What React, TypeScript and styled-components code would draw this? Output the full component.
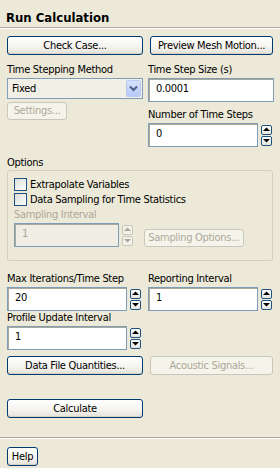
import React from 'react'
import styled, { createGlobalStyle } from 'styled-components'

const GlobalStyle = createGlobalStyle`
    html, body {
        margin: 0;
        padding: 0;
        background: #ECE9D8;
    }
    body {
        font-family: "DejaVu Sans Condensed", "DejaVu Sans", sans-serif;
        font-size: 11px;
        letter-spacing: -0.3px;
        color: #000;
    }
`

const Panel = styled.div`
    width: 280px;
    height: 468px;
    background: #ECE9D8;
    display: flex;
    flex-direction: column;
    overflow: hidden;
`

const Header = styled.div`
    height: 28px;
    box-sizing: border-box;
    padding: 10px 6px 0;
    border-bottom: 1px solid #ACA899;
`

const Title = styled.div`
    font-size: 13px;
    font-weight: bold;
    line-height: 16px;
    letter-spacing: 0;
`

const Body = styled.div`
    flex: 1;
    border-top: 1px solid #fff;
    padding: 7px 7px 0;
    display: flex;
    flex-direction: column;
`

const ButtonRow = styled.div<{ $top?: number }>`
    display: grid;
    grid-template-columns: 136px 123px;
    column-gap: 7px;
    margin-top: ${p => p.$top ?? 0}px;
`

const Button = styled.button<{ $width?: number; $height?: number }>`
    box-sizing: border-box;
    height: ${p => p.$height ?? 19}px;
    width: ${p => (p.$width ? `${p.$width}px` : '100%')};
    padding: 0 2px 1px;
    font: inherit;
    letter-spacing: inherit;
    color: #000;
    border: 1px solid #003C74;
    border-radius: 3px;
    background: linear-gradient(#FFFFFF 0%, #F4F3EE 60%, #E3E1D8 100%);
    box-shadow: inset 0 -1px 0 #D6D0C5;
    white-space: nowrap;
    &:disabled {
        color: #ACA899;
        border-color: #C9C7BA;
        background: #F5F4EA;
        box-shadow: none;
    }
`

const FieldGrid = styled.div<{ $top?: number }>`
    display: grid;
    grid-template-columns: 136px 126px;
    column-gap: 5px;
    margin-top: ${p => p.$top ?? 8}px;
`

const Column = styled.div`
    display: flex;
    flex-direction: column;
    align-items: flex-start;
`

const Label = styled.div<{ $top?: number; $disabled?: boolean }>`
    line-height: 14px;
    height: 14px;
    white-space: nowrap;
    margin-top: ${p => p.$top ?? 0}px;
    color: ${p => (p.$disabled ? '#ACA899' : '#000')};
`

const Select = styled.div`
    box-sizing: border-box;
    margin-top: 1px;
    width: 136px;
    height: 21px;
    border: 1px solid #7F9DB9;
    background: #F1EFE6;
    display: flex;
    align-items: center;
    padding: 1px;
`

const SelectText = styled.span`
    flex: 1;
    padding-left: 3px;
    padding-bottom: 1px;
`

const SelectArrow = styled.span`
    width: 15px;
    height: 17px;
    box-sizing: border-box;
    border: 1px solid #B9CBF3;
    border-radius: 2px;
    background: linear-gradient(#D6E1FD, #B7C9F8);
    display: flex;
    align-items: center;
    justify-content: center;
`

const Input = styled.input<{ $disabled?: boolean }>`
    box-sizing: border-box;
    flex: 1;
    min-width: 0;
    width: 100%;
    height: 24px;
    margin: 0;
    padding: 0 4px 3px 7px;
    font: inherit;
    letter-spacing: inherit;
    color: ${p => (p.$disabled ? '#ACA899' : '#000')};
    background: ${p => (p.$disabled ? '#EFEDE4' : '#fff')};
    border: 1px solid #7F9DB9;
    box-shadow: inset 1px 1px 0 #ACA899;
    outline: none;
`

const PlainField = styled.div`
    margin-top: 1px;
    width: 100%;
    display: flex;
`

const SpinWrap = styled.div<{ $width?: number }>`
    margin-top: 1px;
    width: ${p => (p.$width ? `${p.$width}px` : '100%')};
    box-sizing: border-box;
    padding-right: 2px;
    display: flex;
    align-items: center;
    gap: 3px;
`

const Spinner = styled.div`
    display: flex;
    flex-direction: column;
    gap: 1px;
`

const SpinButton = styled.span<{ $disabled?: boolean }>`
    box-sizing: border-box;
    width: 11px;
    height: 10px;
    border: 1px solid ${p => (p.$disabled ? '#C9C7BA' : '#1C5180')};
    border-radius: 2px;
    background: ${p => (p.$disabled ? '#F2F1EA' : 'linear-gradient(#FFFFFF, #E6E5DE)')};
    display: flex;
    align-items: center;
    justify-content: center;
`

const OptionsBox = styled.div`
    border: 1px solid #D0D0BF;
    border-radius: 3px;
    padding: 7px 6px 13px;
`

const CheckRow = styled.label`
    display: flex;
    align-items: center;
    height: 13px;
    gap: 3px;
    margin-bottom: 2px;
    white-space: nowrap;
`

const CheckBox = styled.span`
    box-sizing: border-box;
    width: 13px;
    height: 13px;
    border: 1px solid #1C5180;
    background: linear-gradient(135deg, #DCDCD7, #FFFFFF);
`

const SamplingRow = styled.div`
    display: flex;
    align-items: flex-end;
    gap: 9px;
`

const Footer = styled.div`
    height: 31px;
    box-sizing: border-box;
    border-top: 1px solid #ACA899;
    box-shadow: inset 0 1px 0 #fff;
    padding: 9px 7px 0;
`

const Arrow = ({ down, disabled }: { down?: boolean; disabled?: boolean }) => (
    <svg width="7" height="5" viewBox="0 0 7 5">
        <polygon
            points={down ? '0,1 7,1 3.5,4.5' : '0,4 7,4 3.5,0.5'}
            fill={disabled ? '#ACA899' : '#000'}
        />
    </svg>
)

const SpinField = ({ value, width, disabled }: { value: string; width?: number; disabled?: boolean }) => (
    <SpinWrap $width={width}>
        <Input readOnly defaultValue={value} $disabled={disabled} />
        <Spinner>
            <SpinButton $disabled={disabled}><Arrow disabled={disabled} /></SpinButton>
            <SpinButton $disabled={disabled}><Arrow down disabled={disabled} /></SpinButton>
        </Spinner>
    </SpinWrap>
)

export default function App() {
    return (
        <Panel>
            <GlobalStyle />
            <Header>
                <Title>Run Calculation</Title>
            </Header>
            <Body>
                <ButtonRow>
                    <Button>Check Case...</Button>
                    <Button>Preview Mesh Motion...</Button>
                </ButtonRow>

                <FieldGrid>
                    <Column>
                        <Label>Time Stepping Method</Label>
                        <Select>
                            <SelectText>Fixed</SelectText>
                            <SelectArrow>
                                <svg width="9" height="7" viewBox="0 0 9 7">
                                    <path d="M1 1.5 L4.5 5 L8 1.5" stroke="#4D6185" strokeWidth="2" fill="none" />
                                </svg>
                            </SelectArrow>
                        </Select>
                        <Button $width={60} $height={18} disabled style={{ marginTop: 3 }}>Settings...</Button>
                    </Column>
                    <Column>
                        <Label>Time Step Size (s)</Label>
                        <PlainField>
                            <Input readOnly defaultValue="0.0001" />
                        </PlainField>
                        <Label $top={6}>Number of Time Steps</Label>
                        <SpinField value="0" />
                    </Column>
                </FieldGrid>

                <Label $top={9}>Options</Label>
                <OptionsBox>
                    <CheckRow><CheckBox />Extrapolate Variables</CheckRow>
                    <CheckRow><CheckBox />Data Sampling for Time Statistics</CheckRow>
                    <Label $disabled>Sampling Interval</Label>
                    <SamplingRow>
                        <SpinField value="1" width={121} disabled />
                        <Button $width={100} $height={18} disabled>Sampling Options...</Button>
                    </SamplingRow>
                </OptionsBox>

                <FieldGrid $top={11}>
                    <Column>
                        <Label>Max Iterations/Time Step</Label>
                        <SpinField value="20" />
                        <Label>Profile Update Interval</Label>
                        <SpinField value="1" />
                    </Column>
                    <Column>
                        <Label>Reporting Interval</Label>
                        <SpinField value="1" />
                    </Column>
                </FieldGrid>

                <ButtonRow $top={6}>
                    <Button>Data File Quantities...</Button>
                    <Button disabled>Acoustic Signals...</Button>
                </ButtonRow>

                <ButtonRow $top={24}>
                    <Button>Calculate</Button>
                </ButtonRow>
            </Body>
            <Footer>
                <Button $width={31}>Help</Button>
            </Footer>
        </Panel>
    )
}
